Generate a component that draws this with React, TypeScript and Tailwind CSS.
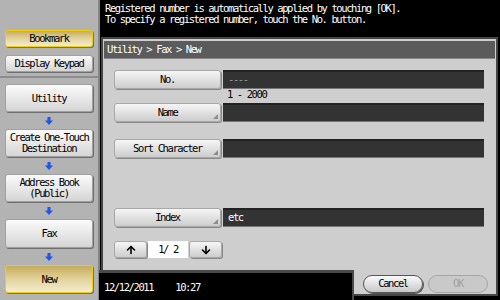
import type { ReactNode } from 'react';
import { ArrowUp, ArrowDown } from 'lucide-react';

const mono = "font-['DejaVu_Sans_Mono','Liberation_Mono',monospace] text-[10.5px] tracking-[-1.4px]";

function BlueArrow() {
  return (
    <div className="h-[17px] flex items-center justify-center">
      <svg width="8" height="8" viewBox="0 0 8 8">
        <rect x="2.5" y="0" width="3" height="4" fill="#1f55e8" />
        <polygon points="0,3.5 8,3.5 4,8" fill="#1f55e8" />
      </svg>
    </div>
  );
}

function SideBtn({ children, active, h }: { children: ReactNode; active?: boolean; h: string }) {
  return (
    <div
      className={`${h} mx-[5px] w-[88px] rounded-[3px] flex items-center justify-center text-center leading-[11px] text-black shadow-[1px_1px_0_#6e6e6e] ${
        active
          ? 'border border-[#f0d000] bg-linear-to-b from-[#c6ab5a] via-[#e2d39c] to-[#f3eccf]'
          : 'border border-[#a0a0a0] bg-linear-to-b from-[#fbfbfb] to-[#d5d5d5]'
      }`}
    >
      {children}
    </div>
  );
}

function Corner() {
  return (
    <svg className="absolute right-[2px] bottom-[2px]" width="5" height="5" viewBox="0 0 5 5">
      <polygon points="5,0 5,5 0,5" fill="#8c8c8c" />
    </svg>
  );
}

function FieldRow({ label, value, corner, mt, dim }: { label: string; value?: string; corner?: boolean; mt: string; dim?: boolean }) {
  return (
    <div className={`${mt} flex h-[19px] ml-[11px]`}>
      <div className="relative w-[107px] rounded-[3px] border border-[#a8a8a8] bg-linear-to-b from-[#f6f6f6] to-[#cdcdcd] shadow-[1px_1px_0_#888] flex items-center justify-center text-black">
        {label}
        {corner && <Corner />}
      </div>
      <div
        className={`ml-[2px] w-[261px] bg-[#333333] border-t-2 border-[#222] border-b border-b-[#777] flex items-center pl-[5px] ${
          dim ? 'text-[#9a9a9a]' : 'text-white'
        }`}
      >
        {value}
      </div>
    </div>
  );
}

export default function App() {
  return (
    <div className={`w-[500px] h-[300px] flex overflow-hidden bg-black ${mono}`}>
      <aside className="w-[100px] h-full bg-[#b3b3b3] border-r-2 border-[#858585] flex flex-col">
        <div className="h-[78px] border-b-2 border-[#8c8c8c] flex flex-col pt-[30px]">
          <SideBtn h="h-[17px]" active>Bookmark</SideBtn>
          <div className="mt-[8px]">
            <SideBtn h="h-[17px]">Display Keypad</SideBtn>
          </div>
        </div>
        <div className="flex flex-col pt-[6px]">
          <SideBtn h="h-[28px]">Utility</SideBtn>
          <BlueArrow />
          <SideBtn h="h-[28px]">
            Create One-Touch
            <br />
            Destination
          </SideBtn>
          <BlueArrow />
          <SideBtn h="h-[28px]">
            Address Book
            <br />
            (Public)
          </SideBtn>
          <BlueArrow />
          <SideBtn h="h-[29px]">Fax</SideBtn>
          <BlueArrow />
          <SideBtn h="h-[28px]" active>New</SideBtn>
        </div>
      </aside>

      <main className="w-[400px] h-full flex flex-col">
        <div className="h-[37px] pl-[5px] pt-[3px] text-white leading-[11px]">
          <div>Registered number is automatically applied by touching [OK].</div>
          <div>To specify a registered number, touch the No. button.</div>
        </div>

        <section className="ml-[1px] mr-[2px] h-[259px] border-2 border-[#454545] bg-[#cecece] flex flex-col">
          <div className="mt-[2px] mx-[1px] h-[18px] bg-[#5b5b5b] border-b border-[#888] flex items-center pl-[3px] text-white">
            Utility &gt; Fax &gt; New
          </div>

          <FieldRow label="No." value="----" mt="mt-[11px]" dim />
          <div className="h-[11px] flex items-center pl-[124px] text-black">1 - 2000</div>
          <FieldRow label="Name" corner mt="mt-[3px]" />
          <FieldRow label="Sort Character" corner mt="mt-[17px]" />
          <FieldRow label="Index" value="etc" corner mt="mt-[50px]" />

          <div className="mt-[14px] ml-[11px] h-[17px] flex items-stretch">
            <div className="w-[33px] rounded-[3px] border border-[#a8a8a8] bg-linear-to-b from-[#f6f6f6] to-[#cdcdcd] shadow-[1px_1px_0_#888] flex items-center justify-center">
              <ArrowUp size={12} strokeWidth={3.2} color="#000" />
            </div>
            <div className="ml-[1px] w-[40px] bg-white flex items-center justify-center text-black">1/ 2</div>
            <div className="ml-[1px] w-[33px] rounded-[3px] border border-[#a8a8a8] bg-linear-to-b from-[#f6f6f6] to-[#cdcdcd] shadow-[1px_1px_0_#888] flex items-center justify-center">
              <ArrowDown size={12} strokeWidth={3.2} color="#000" />
            </div>
          </div>

          <div className="flex-1" />

          <div className="h-[24px] flex">
            <div className="-ml-[4px] -mb-[6px] w-[255px] h-[30px] bg-black border-t-[3px] border-r-2 border-[#4a4a4a] flex items-center pl-[5px] pt-[3px] text-white">
              <span>12/12/2011</span>
              <span className="ml-[22px]">10:27</span>
            </div>
            <div className="flex-1 flex items-center gap-[5px] pl-[9px] pt-[3px]">
              <div className="w-[60px] h-[18px] rounded-full border border-[#555] bg-linear-to-b from-[#fbfbfb] to-[#c8c8c8] shadow-[1px_1px_0_#555] flex items-center justify-center text-black">
                Cancel
              </div>
              <div className="w-[60px] h-[18px] rounded-full border border-[#a6a6a6] bg-[#c9c9c9] flex items-center justify-center text-[#a2a2a2]">
                OK
              </div>
            </div>
          </div>
        </section>
      </main>
    </div>
  );
}
